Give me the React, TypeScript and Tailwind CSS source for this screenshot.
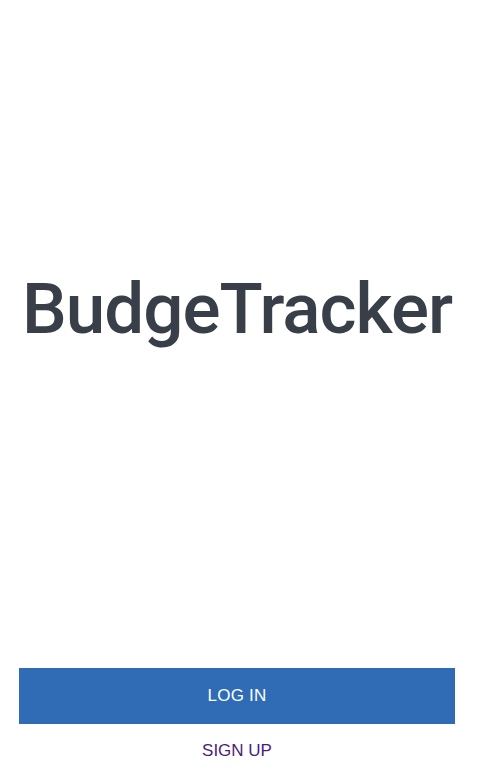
export default function App() {
  return (
    <div className="h-[772px] w-[474px] bg-white flex flex-col">
      <div className="h-[618px] flex items-center justify-center">
        <h1 className="text-[71px] leading-[82px] tracking-[-1px] text-[#393f48] font-['Roboto',sans-serif] font-medium">
          BudgeTracker
        </h1>
      </div>
      <div className="mt-[50px] px-[19px] flex flex-col">
        <button className="h-[56px] w-full bg-[#306cb6] text-white text-[17px] tracking-[0.2px] font-['Liberation_Sans',Arial,sans-serif]">
          LOG IN
        </button>
        <button className="mt-[17px] leading-[20px] text-[#4a1d7c] text-[17px] font-['Liberation_Sans',Arial,sans-serif] self-center">
          SIGN UP
        </button>
      </div>
    </div>
  );
}
